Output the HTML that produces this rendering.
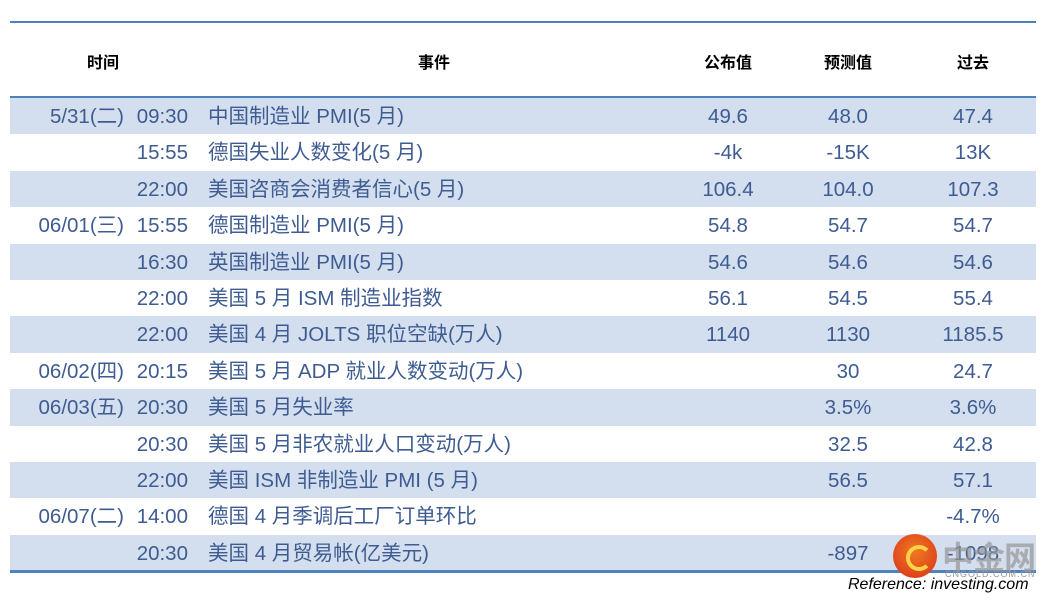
<!DOCTYPE html>
<html><head><meta charset="utf-8"><style>
body{margin:0;width:1050px;height:605px;background:#fff;position:relative;overflow:hidden;font-family:"Liberation Sans","Noto Sans CJK SC",sans-serif;}
.line{position:absolute;left:10px;width:1026px;background:#4f81bd;}
.h{position:absolute;top:49px;font-size:16px;font-weight:bold;color:#000;transform:translateX(-50%);white-space:nowrap;}
.row{position:absolute;left:10px;width:1026px;height:36.4px;font-size:20.5px;color:#3e5c92;line-height:37px;}
.row.s{background:#d3deee;}
.row span{position:absolute;white-space:nowrap;top:0;}
.d{right:912px;}
.t{right:848px;}
.e{left:198px;}
.c{transform:translateX(-50%);}
</style></head><body>
<div class="line" style="top:21px;height:2px"></div>
<div class="h" style="left:103px">时间</div>
<div class="h" style="left:434px">事件</div>
<div class="h" style="left:728px">公布值</div>
<div class="h" style="left:848px">预测值</div>
<div class="h" style="left:973px">过去</div>
<div class="line" style="top:96px;height:3px"></div>

<div class="row s" style="top:98px"><span class="d">5/31(二)</span><span class="t">09:30</span><span class="e">中国制造业 PMI(5 月)</span><span class="c" style="left:718px">49.6</span><span class="c" style="left:838px">48.0</span><span class="c" style="left:963px">47.4</span></div>
<div class="row" style="top:134.4px"><span class="t">15:55</span><span class="e">德国失业人数变化(5 月)</span><span class="c" style="left:718px">-4k</span><span class="c" style="left:838px">-15K</span><span class="c" style="left:963px">13K</span></div>
<div class="row s" style="top:170.8px"><span class="t">22:00</span><span class="e">美国咨商会消费者信心(5 月)</span><span class="c" style="left:718px">106.4</span><span class="c" style="left:838px">104.0</span><span class="c" style="left:963px">107.3</span></div>
<div class="row" style="top:207.2px"><span class="d">06/01(三)</span><span class="t">15:55</span><span class="e">德国制造业 PMI(5 月)</span><span class="c" style="left:718px">54.8</span><span class="c" style="left:838px">54.7</span><span class="c" style="left:963px">54.7</span></div>
<div class="row s" style="top:243.6px"><span class="t">16:30</span><span class="e">英国制造业 PMI(5 月)</span><span class="c" style="left:718px">54.6</span><span class="c" style="left:838px">54.6</span><span class="c" style="left:963px">54.6</span></div>
<div class="row" style="top:280px"><span class="t">22:00</span><span class="e">美国 5 月 ISM 制造业指数</span><span class="c" style="left:718px">56.1</span><span class="c" style="left:838px">54.5</span><span class="c" style="left:963px">55.4</span></div>
<div class="row s" style="top:316.4px"><span class="t">22:00</span><span class="e">美国 4 月 JOLTS 职位空缺(万人)</span><span class="c" style="left:718px">1140</span><span class="c" style="left:838px">1130</span><span class="c" style="left:963px">1185.5</span></div>
<div class="row" style="top:352.8px"><span class="d">06/02(四)</span><span class="t">20:15</span><span class="e">美国 5 月 ADP 就业人数变动(万人)</span><span class="c" style="left:838px">30</span><span class="c" style="left:963px">24.7</span></div>
<div class="row s" style="top:389.2px"><span class="d">06/03(五)</span><span class="t">20:30</span><span class="e">美国 5 月失业率</span><span class="c" style="left:838px">3.5%</span><span class="c" style="left:963px">3.6%</span></div>
<div class="row" style="top:425.6px"><span class="t">20:30</span><span class="e">美国 5 月非农就业人口变动(万人)</span><span class="c" style="left:838px">32.5</span><span class="c" style="left:963px">42.8</span></div>
<div class="row s" style="top:462px"><span class="t">22:00</span><span class="e">美国 ISM 非制造业 PMI (5 月)</span><span class="c" style="left:838px">56.5</span><span class="c" style="left:963px">57.1</span></div>
<div class="row" style="top:498.4px"><span class="d">06/07(二)</span><span class="t">14:00</span><span class="e">德国 4 月季调后工厂订单环比</span><span class="c" style="left:963px">-4.7%</span></div>
<div class="row s" style="top:534.8px"><span class="t">20:30</span><span class="e">美国 4 月贸易帐(亿美元)</span><span class="c" style="left:838px">-897</span><span class="c" style="left:963px">-1098</span></div>
<div class="line" style="top:570px;height:3px"></div>

<div style="position:absolute;left:893px;top:534px;width:44px;height:44px;border-radius:50%;background:radial-gradient(circle at 50% 40%,#f07a20,#d8301a);"></div>
<div style="position:absolute;left:906px;top:545px;width:18px;height:18px;border-radius:50%;border:4px solid #ffd24a;border-right-color:transparent;"></div>
<div style="position:absolute;left:942px;top:533px;font-size:32px;font-weight:bold;color:rgba(150,150,150,0.7);letter-spacing:-1px;">中金网</div>
<div style="position:absolute;left:945px;top:569px;font-size:9px;color:#999;letter-spacing:1px;">CNGOLD.COM.CN</div>
<div style="position:absolute;left:848px;top:576px;font-size:16px;font-style:italic;color:#000;">Reference: investing.com</div>
</body></html>
